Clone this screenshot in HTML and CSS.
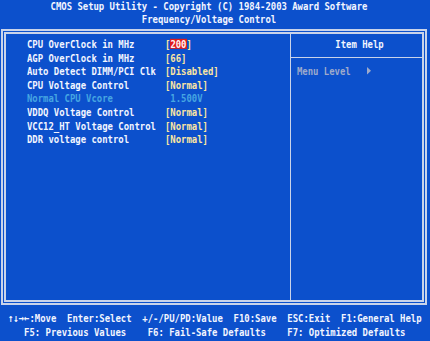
FILE: index.html
```html
<!DOCTYPE html>
<html lang="en">
<head>
    <meta charset="UTF-8">
    <title>CMOS Setup Utility</title>
    <link rel="stylesheet" href="styles.css">
</head>
<body>
    <div class="screen">
        <div class="title">CMOS Setup Utility - Copyright (C) 1984-2003 Award Software</div>
        <div class="title">Frequency/Voltage Control</div>

        <div class="frame">
            <div class="items">
                <div class="row"><span>CPU OverClock in MHz</span><span class="value">[<span class="sel">200</span>]</span></div>
                <div class="row"><span>AGP OverClock in MHz</span><span class="value">[66]</span></div>
                <div class="row"><span>Auto Detect DIMM/PCI Clk</span><span class="value">[Disabled]</span></div>
                <div class="row"><span>CPU Voltage Control</span><span class="value">[Normal]</span></div>
                <div class="row dim"><span>Normal CPU Vcore</span><span> 1.500V</span></div>
                <div class="row"><span>VDDQ Voltage Control</span><span class="value">[Normal]</span></div>
                <div class="row"><span>VCC12_HT Voltage Control</span><span class="value">[Normal]</span></div>
                <div class="row"><span>DDR voltage control</span><span class="value">[Normal]</span></div>
            </div>
            <div class="help">
                <div class="help-head"><div class="line">Item Help</div></div>
                <div class="help-body"><div class="line">Menu Level   <span class="arrow"></span></div></div>
            </div>
        </div>

        <div class="keys">
            <div class="line">↑↓→←:Move  Enter:Select  +/-/PU/PD:Value  F10:Save  ESC:Exit  F1:General Help</div>
            <div class="line">   F5: Previous Values    F6: Fail-Safe Defaults    F7: Optimized Defaults</div>
        </div>
    </div>
</body>
</html>
```

FILE: styles.css
```css
body {
    margin: 0;
    background-color: #0c50cc;
}
.screen {
    width: 430px;
    height: 341px;
    overflow: hidden;
    font-family: 'DejaVu Sans Mono', monospace;
    font-weight: bold;
    font-size: 8.93px;
    color: #f2f5ff;
}
/* text mode glyphs are taller than they are wide */
.title, .row, .line {
    height: 13.6px;
    line-height: 13.6px;
    white-space: pre;
    transform: scaleY(1.25);
}
.title {
    height: 13px;
    line-height: 13px;
    text-align: center;
    padding-right: 12px;
}
.frame {
    display: flex;
    height: 266px;
    margin: 3px 3px 0 1px;
    border: 5px double #c9d3ea;
}
.items {
    width: 285px;
    box-sizing: border-box;
    padding: 4px 0 0 21px;
    border-right: 1px solid #c9d3ea;
}
.row {
    display: grid;
    grid-template-columns: 138px auto;
}
.value {
    color: #fbe6a2;
}
.sel {
    display: inline-block;
    height: 8px;
    line-height: 8px;
    background-color: #e11b1b;
    color: #fff4f4;
}
.dim {
    color: #46a6e2;
}
.help {
    flex: 1;
}
.help-head {
    height: 24px;
    box-sizing: border-box;
    padding: 4px 0 0 6px;
    text-align: center;
    border-bottom: 1px solid #c9d3ea;
}
.help-body {
    padding: 7px 0 0 6px;
    color: #9eaacb;
}
.arrow {
    display: inline-block;
    border-left: 4px solid #9eaacb;
    border-top: 3px solid transparent;
    border-bottom: 3px solid transparent;
}
.keys {
    padding: 7px 0 0 8px;
}
```
